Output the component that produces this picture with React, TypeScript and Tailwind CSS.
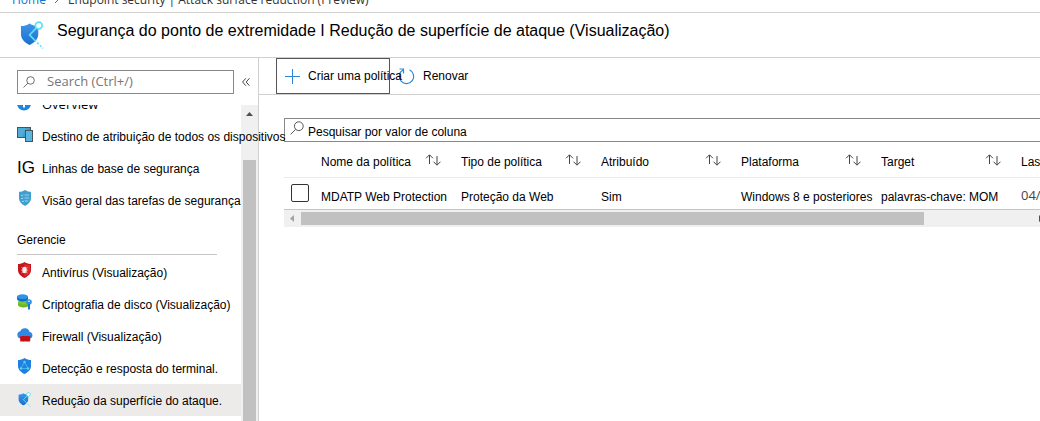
import type { ReactNode } from "react";

function AttackShield({ className }: { className: string }) {
  return (
    <svg viewBox="0 0 26 30" className={className} aria-hidden="true">
      <defs>
        <linearGradient id="asr" x1="0" y1="0" x2="0" y2="1">
          <stop offset="0" stopColor="#3f95e8" />
          <stop offset="1" stopColor="#1a6fce" />
        </linearGradient>
      </defs>
      <path d="M10 2.500c3 2 6 2.600 9 2.600v8.400c0 6-5 9.500-9 11.500-4-2-9-5.500-9-11.500V5.100c3 0 6-.6 9-2.600z" fill="url(#asr)" />
      <path d="M17 7l-7 7.500 5 5" fill="none" stroke="#5fe0f5" strokeWidth="1.800" />
      <path d="M15 19.500l9 9" fill="none" stroke="#5fe0f5" strokeWidth="1.800" strokeDasharray="2.200 1.800" />
      <circle cx="19.500" cy="4.500" r="3.500" fill="#fff" stroke="#5fe0f5" strokeWidth="1.800" />
    </svg>
  );
}

function SearchGlyph({ className }: { className: string }) {
  return (
    <svg viewBox="0 0 14 14" className={className} fill="none" stroke="#555" aria-hidden="true">
      <circle cx="8.800" cy="5.200" r="4.400" />
      <path d="M5.700 8.300L.6 13.400" />
    </svg>
  );
}

const icons: Record<string, ReactNode> = {
  info: (
    <svg viewBox="0 0 16 16" className="size-4">
      <circle cx="7" cy="7.500" r="7" fill="#1f86dc" />
      <path d="M6 6h2v5.500H6zM6 3h2v2H6z" fill="#fff" />
    </svg>
  ),
  devices: (
    <svg viewBox="0 0 16 16" className="mb-1 size-4">
      <path d="M0 1h14v11H0z" fill="#4a5358" />
      <path d="M1 2h12v9H1z" fill="#3f9fd0" />
      <path d="M8 4h8v12H8z" fill="#4a5358" />
      <path d="M9 5h6v10H9z" fill="#58b8e2" />
      <path d="M1 2h8L5 11H1z" fill="#63b9df" opacity=".5" />
    </svg>
  ),
  check: (
    <svg viewBox="0 0 16 16" className="mb-1 size-4">
      <path d="M8 0c2 1.400 4 1.800 6 1.800V8c0 4-3.200 6.400-6 8-2.800-1.600-6-4-6-8V1.800C4 1.800 6 1.400 8 0z" fill="#3f9fcf" />
      <path d="M4 5l1 1 1-1.500M7.500 5H12M4 8l1 1 1-1.500M7.500 8H12M5 11l1 1 1-1.500M8 11h3" fill="none" stroke="#b5dff2" strokeWidth=".8" />
    </svg>
  ),
  virus: (
    <svg viewBox="0 0 16 16" className="mb-1 size-4">
      <path d="M7.500 0c2.200 1.500 4.500 2 6.500 2v6c0 4-3.400 6.500-6.500 8C4.400 14.500 1 12 1 8V2c2 0 4.300-.5 6.500-2z" fill="#c4161c" />
      <path d="M7.500 1.500C9 2.500 11 3 13 3v5c0 3.300-2.800 5.500-5.500 6.800z" fill="#e0282d" />
      <path d="M4.500 5.500l1.500 1M10.500 5.500L9 6.500M4 8.200h7M4.500 11l1.500-1M10.500 11L9 10" stroke="#f2a8a8" strokeWidth=".8" />
      <ellipse cx="7.500" cy="8" rx="2.200" ry="3.200" fill="#fbe9e9" />
    </svg>
  ),
  disk: (
    <svg viewBox="0 0 16 16" className="mb-1 size-4">
      <path d="M1 8v3c0 1.400 2.500 2.400 5.500 2.400S12 12.400 12 11V8z" fill="#6fb526" />
      <ellipse cx="6.500" cy="8.200" rx="5.500" ry="2.400" fill="#7cc92f" />
      <path d="M0 2.500V5c0 1.400 2.500 2.400 5.500 2.400S11 6.400 11 5V2.500z" fill="#0f6cc4" />
      <ellipse cx="5.500" cy="2.700" rx="5.500" ry="2.400" fill="#2b94ec" />
      <circle cx="12" cy="8" r="2.800" fill="#2b8fe6" />
      <circle cx="12" cy="7.200" r=".8" fill="#fff" />
      <path d="M11 10h2v5l-1 1-1-1z" fill="#1b77d2" />
    </svg>
  ),
  firewall: (
    <svg viewBox="0 0 16 16" className="mb-[2px] size-4">
      <path d="M4 11.500a3.700 3.700 0 01-.8-7.300A5 5 0 0112.600 5 3.300 3.300 0 0112.800 11.500z" fill="#2f88e2" />
      <path d="M3.200 9h10v5.500h-10z" fill="#c8161d" />
      <path d="M3.200 10.800h10M3.200 12.600h10M6.500 9v1.800M10 9v1.800M5 10.800v1.800M8.500 10.800v1.800M6.500 12.600v1.800M10 12.600v1.800" stroke="#9c1016" strokeWidth=".5" />
    </svg>
  ),
  detect: (
    <svg viewBox="0 0 16 16" className="mb-1 size-4">
      <path d="M7.500 0c2.200 1.500 4.500 2 6.500 2v6c0 4-3.400 6.500-6.500 8C4.400 14.500 1 12 1 8V2c2 0 4.300-.5 6.500-2z" fill="#2080e0" />
      <path d="M7.500 4L4 10.500h7z" fill="none" stroke="#4cbcf0" strokeWidth=".8" />
      <circle cx="7.500" cy="4" r="1.200" fill="#5fd0f5" />
      <circle cx="4" cy="10.500" r="1.200" fill="#5fd0f5" />
      <circle cx="11" cy="10.500" r="1.200" fill="#5fd0f5" />
    </svg>
  ),
  reduce: <AttackShield className="h-4 w-4" />,
};

function NavItem({ icon, label, active }: { icon: string; label: string; active?: boolean }) {
  return (
    <a
      href="#"
      aria-current={active ? "page" : undefined}
      className={`flex h-8 shrink-0 items-center pl-[17px] whitespace-nowrap ${active ? "bg-[#edebe9]" : ""}`}
    >
      <span className="flex w-[25px] shrink-0">
        {icon === "IG" ? <span className="text-[17px] leading-4">IG</span> : icons[icon]}
      </span>
      <span className={icon === "info" ? "font-['Open_Sans',sans-serif] text-[13px] leading-4" : "pt-[2px]"}>{label}</span>
    </a>
  );
}

function SortArrows() {
  return (
    <svg viewBox="0 0 16 12" className="mb-1 h-3 w-4 shrink-0" fill="none" stroke="#444" aria-hidden="true">
      <path d="M4.500 10V1M1 4.300L4.500.8 8 4.300M12 2v9M8.500 7.700L12 11.200l3.500-3.500" />
    </svg>
  );
}

const columns = ["Nome da política", "Tipo de política", "Atribuído", "Plataforma", "Target"];
const cells = ["MDATP Web Protection", "Proteção da Web", "Sim", "Windows 8 e posteriores", "palavras-chave: MOM"];

export default function App() {
  return (
    <div className="flex min-h-screen flex-col overflow-hidden bg-white font-['Liberation_Sans',Arial,sans-serif] text-xs text-black">
      <nav
        aria-label="Breadcrumb"
        className="flex h-[13px] items-end gap-2 overflow-hidden border-b border-[#d2d0ce] pb-1 pl-3 font-['Open_Sans',sans-serif] text-xs leading-4 text-[#333]"
      >
        <a href="#" className="text-[#0078d4]">Home</a>
        <svg viewBox="0 0 6 10" className="mb-1 h-[10px] w-[6px]" fill="none" stroke="#666" aria-hidden="true">
          <path d="M1 1l4 4-4 4" />
        </svg>
        <span>Endpoint security | Attack surface reduction (Preview)</span>
      </nav>

      <header className="flex h-[45px] items-start gap-3 border-b border-[#d2d0ce] pt-2 pl-5">
        <AttackShield className="h-[29px] w-[25px] shrink-0" />
        <h1 className="text-base leading-5 whitespace-nowrap">
          Segurança do ponto de extremidade I Redução de superfície de ataque (Visualização)
        </h1>
      </header>

      <div className="flex flex-1">
        <aside className="relative z-10 flex w-[259px] shrink-0 flex-col border-r border-[#d2d0ce]">
          <div className="flex h-[47px] shrink-0 items-center gap-2 pl-[17px]">
            <label className="flex h-6 w-[217px] items-center gap-3 border border-[#8a8886] pl-[5px]">
              <SearchGlyph className="h-3 w-3 shrink-0" />
              <input
                type="text"
                aria-label="Search"
                placeholder="Search (Ctrl+/)"
                className="w-full min-w-0 bg-transparent font-['Open_Sans',sans-serif] text-[13px] outline-none placeholder:text-[#767676]"
              />
            </label>
            <button type="button" aria-label="Recolher menu" className="text-[#444]">
              <svg viewBox="0 0 8 8" className="h-2 w-2" fill="none" stroke="currentColor" aria-hidden="true">
                <path d="M3.800.3L.6 4l3.200 3.700M7.400.3L4.200 4l3.200 3.700" />
              </svg>
            </button>
          </div>

          <div className="flex flex-1 [overflow-y:clip]">
            <nav aria-label="Menu" className="relative z-10 -mt-[17px] flex w-[241px] shrink-0 flex-col">
              <NavItem icon="info" label="Overview" />
              <NavItem icon="devices" label="Destino de atribuição de todos os dispositivos" />
              <NavItem icon="IG" label="Linhas de base de segurança" />
              <NavItem icon="check" label="Visão geral das tarefas de segurança" />
              <h2 className="mr-6 mb-px ml-[17px] border-b border-[#c8c6c4] pt-4 pb-[6px] leading-4">Gerencie</h2>
              <NavItem icon="virus" label="Antivírus (Visualização)" />
              <NavItem icon="disk" label="Criptografia de disco (Visualização)" />
              <NavItem icon="firewall" label="Firewall (Visualização)" />
              <NavItem icon="detect" label="Detecção e resposta do terminal." />
              <NavItem icon="reduce" label="Redução da superfície do ataque." active />
            </nav>
            <div className="flex flex-1 flex-col bg-[#f0f0f0]" aria-hidden="true">
              <svg viewBox="0 0 17 17" className="size-[17px]">
                <path d="M5 11l3.500-4 3.500 4z" fill="#505050" />
              </svg>
              <div className="mt-[38px] mr-[2px] ml-[2px] flex-1 bg-[#c1c1c1]" />
            </div>
          </div>
        </aside>

        <main className="min-w-0 flex-1">
          <div className="flex h-[37px] items-start border-b border-[#d2d0ce] pl-[17px]">
            <button
              type="button"
              className="relative z-10 flex h-9 w-[114px] shrink-0 items-center gap-2 border border-[#555] pl-2 text-left whitespace-nowrap"
            >
              <svg viewBox="0 0 15 15" className="h-[15px] w-[15px] shrink-0" fill="none" stroke="#2b88d8" aria-hidden="true">
                <path d="M7.500 0v15M0 7.500h15" />
              </svg>
              Criar uma política
            </button>
            <button type="button" className="flex h-9 items-center gap-2 pl-2">
              <svg viewBox="0 0 17 17" className="h-[17px] w-[17px]" fill="none" stroke="#2b88d8" strokeWidth="1.200" aria-hidden="true">
                <path d="M11.500 1.800a7.200 7.200 0 11-6.600.3M1.500 1h4v4.500" />
              </svg>
              Renovar
            </button>
          </div>

          <div className="overflow-hidden pt-[23px] pl-[25px]">
            <label className="flex h-6 items-center gap-1 border border-r-0 border-[#8a8886] pl-[5px]">
              <SearchGlyph className="mb-1 h-[14px] w-[14px] shrink-0" />
              <input
                type="text"
                aria-label="Pesquisar por valor de coluna"
                placeholder="Pesquisar por valor de coluna"
                className="w-full min-w-0 bg-transparent pt-1 text-xs outline-none placeholder:text-black"
              />
            </label>
            <table className="w-full min-w-[755px] table-fixed border-collapse text-left whitespace-nowrap">
              <colgroup>
                <col className="w-[37px]" />
                <col className="w-[140px]" />
                <col className="w-[140px]" />
                <col className="w-[140px]" />
                <col className="w-[140px]" />
                <col className="w-[140px]" />
                <col />
              </colgroup>
              <thead>
                <tr className="h-[35px] border-b border-[#edebe9]">
                  <td />
                  {columns.map((name) => (
                    <th key={name} scope="col" className="p-0 font-normal">
                      <button type="button" className="flex w-full items-center justify-between pt-[6px] pr-5">
                        {name}
                        <SortArrows />
                      </button>
                    </th>
                  ))}
                  <th scope="col" className="overflow-hidden p-0 pt-[6px] font-normal">Las</th>
                </tr>
              </thead>
              <tbody>
                <tr className="h-8 border-b border-[#c8c6c4]">
                  <td className="p-0 pl-[7px]">
                    <input
                      type="checkbox"
                      aria-label="MDATP Web Protection"
                      className="block size-[18px] appearance-none rounded-[2px] border border-[#333] bg-white"
                    />
                  </td>
                  {cells.map((text) => (
                    <td key={text} className="p-0 pt-2">{text}</td>
                  ))}
                  <td className="overflow-hidden p-0 pt-1 font-['Open_Sans',sans-serif] text-[13px] leading-4 text-[#444]">04/2</td>
                </tr>
              </tbody>
            </table>
            <div className="flex h-[17px] w-[765px] items-center bg-[#f0f0f0]" aria-hidden="true">
              <svg viewBox="0 0 17 17" className="size-[17px] shrink-0">
                <path d="M10 5v7L6 8.500z" fill="#a3a3a3" />
              </svg>
              <div className="h-[13px] w-[623px] bg-[#c1c1c1]" />
              <svg viewBox="0 0 17 17" className="ml-auto size-[17px] shrink-0">
                <path d="M7 5v7l4-3.500z" fill="#505050" />
              </svg>
            </div>
          </div>
        </main>
      </div>
    </div>
  );
}
